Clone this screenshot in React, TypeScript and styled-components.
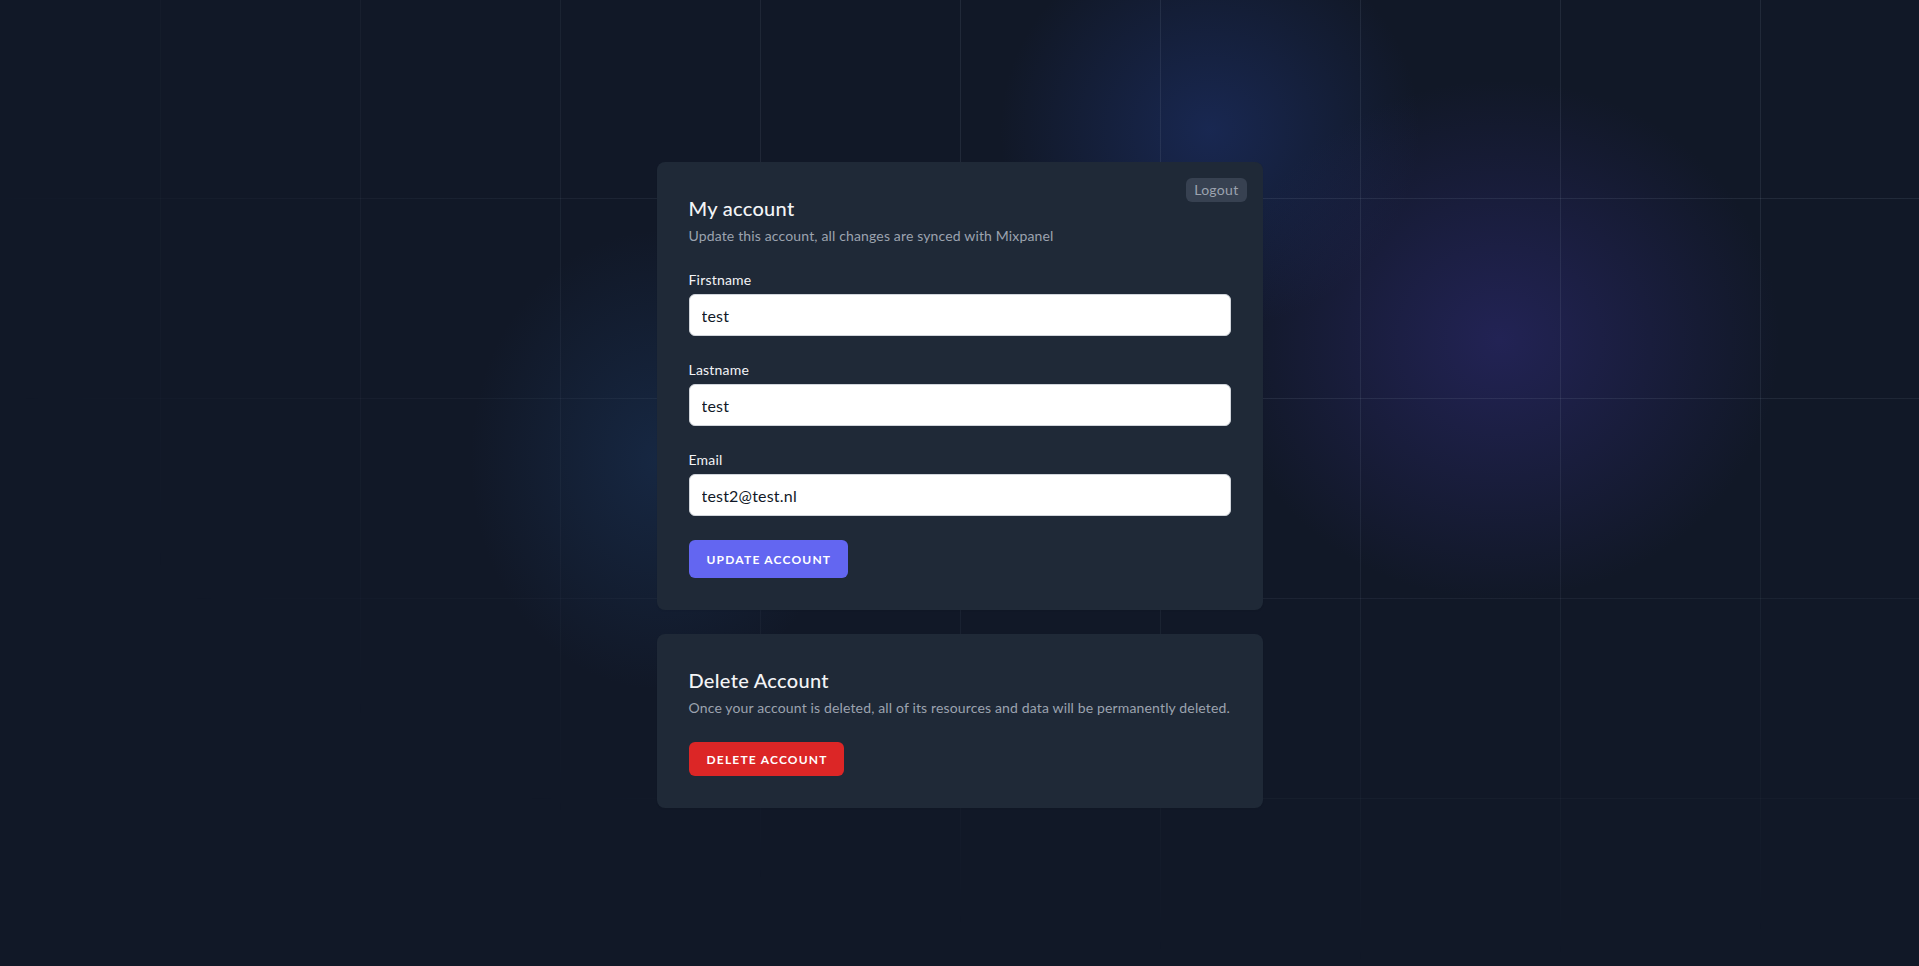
import { createGlobalStyle, styled } from 'styled-components';

const GlobalStyle = createGlobalStyle`
  * {
    box-sizing: border-box;
  }
  html, body {
    margin: 0;
    padding: 0;
    background-color: #111827;
  }
  body {
    font-family: Lato, 'Open Sans', Arial, sans-serif;
    -webkit-font-smoothing: antialiased;
  }
`;

const fields = [
  { id: 'firstname', label: 'Firstname', value: 'test', type: 'text' },
  { id: 'lastname', label: 'Lastname', value: 'test', type: 'text' },
  { id: 'email', label: 'Email', value: 'test2@test.nl', type: 'email' },
];

function App() {
  return (
    <>
      <GlobalStyle />
      <Page>
        <Content>
          <Card>
            <LogoutButton type="button">Logout</LogoutButton>
            <header>
              <Title>My account</Title>
              <Subtitle>Update this account, all changes are synced with Mixpanel</Subtitle>
            </header>

            <Form onSubmit={(e) => e.preventDefault()}>
              {fields.map((field) => (
                <Field key={field.id}>
                  <Label htmlFor={field.id}>{field.label}</Label>
                  <Input id={field.id} type={field.type} defaultValue={field.value} />
                </Field>
              ))}
              {/* <p className="saved">Saved.</p> */}
              <Actions>
                <ActionButton type="submit" $variant="primary">
                  Update account
                </ActionButton>
              </Actions>
            </Form>
          </Card>

          <Card>
            <header>
              <Title>Delete Account</Title>
              <Subtitle>
                Once your account is deleted, all of its resources and data will be permanently deleted.
              </Subtitle>
            </header>
            <Actions $spaced>
              <ActionButton type="button" $variant="danger">
                Delete account
              </ActionButton>
            </Actions>
          </Card>
        </Content>
      </Page>
    </>
  );
}

const Page = styled.div`
  position: relative;
  min-height: 100vh;
  overflow: hidden;
  background-color: #111827;

  /* blurry glows */
  &::before {
    content: '';
    position: absolute;
    inset: 0;
    background:
      radial-gradient(ellipse 280px 260px at 1500px 340px, rgba(55, 48, 140, 0.45), transparent 100%),
      radial-gradient(ellipse 210px 200px at 1210px 130px, rgba(37, 65, 150, 0.38), transparent 100%),
      radial-gradient(ellipse 190px 230px at 660px 460px, rgba(35, 75, 130, 0.3), transparent 100%);
    pointer-events: none;
  }

  /* grid lines */
  &::after {
    content: '';
    position: absolute;
    inset: 0;
    background-image:
      linear-gradient(to right, rgba(148, 163, 184, 0.13) 1px, transparent 1px),
      linear-gradient(to bottom, rgba(148, 163, 184, 0.13) 1px, transparent 1px);
    background-size: 200px 200px;
    background-position: 160px -2px;
    -webkit-mask-image: radial-gradient(ellipse 75% 85% at 72% 15%, #000 35%, transparent 100%);
    mask-image: radial-gradient(ellipse 75% 85% at 72% 15%, #000 35%, transparent 100%);
    pointer-events: none;
  }
`;

const Content = styled.main`
  position: relative;
  z-index: 1;
  width: 606px;
  margin: 0 auto;
  padding-top: 162px;
  display: flex;
  flex-direction: column;
  gap: 24px;
`;

const Card = styled.section`
  position: relative;
  padding: 32px;
  background-color: #1f2937;
  border-radius: 8px;
  box-shadow: 0 1px 2px rgba(0, 0, 0, 0.05);
`;

const LogoutButton = styled.button`
  position: absolute;
  top: 16px;
  right: 16px;
  height: 24px;
  padding: 0 8px;
  border: none;
  border-radius: 6px;
  background-color: #374151;
  color: #9ca3af;
  font-family: inherit;
  font-size: 14px;
  line-height: 20px;
  letter-spacing: 0.3px;
  cursor: pointer;
`;

const Title = styled.h2`
  margin: 0;
  font-size: 20px;
  line-height: 28px;
  font-weight: 500;
  letter-spacing: 0.3px;
  color: #f3f4f6;
`;

const Subtitle = styled.p`
  margin: 4px 0 0;
  font-size: 14px;
  line-height: 20px;
  letter-spacing: 0.15px;
  color: #9ca3af;
  white-space: nowrap;
`;

const Form = styled.form`
  margin-top: 24px;
  display: flex;
  flex-direction: column;
  gap: 24px;
`;

const Field = styled.div`
  display: flex;
  flex-direction: column;
`;

const Label = styled.label`
  font-size: 14px;
  line-height: 20px;
  font-weight: 400;
  letter-spacing: 0.2px;
  color: #f3f4f6;
`;

const Input = styled.input`
  margin-top: 4px;
  width: 100%;
  height: 42px;
  padding: 8px 12px;
  border: 1px solid #d1d5db;
  border-radius: 6px;
  background-color: #fff;
  color: #111827;
  font-family: inherit;
  font-size: 16px;
  line-height: 24px;
  letter-spacing: 0.2px;
  outline: none;
`;

const Actions = styled.div<{ $spaced?: boolean }>`
  display: flex;
  align-items: center;
  gap: 16px;
  margin-top: ${(p) => (p.$spaced ? '24px' : '0')};
`;

const ActionButton = styled.button<{ $variant: 'primary' | 'danger' }>`
  display: inline-flex;
  align-items: center;
  height: ${(p) => (p.$variant === 'primary' ? '38px' : '34px')};
  padding: ${(p) => (p.$variant === 'primary' ? '0 16px 0 17px' : '0 15px 0 17px')};
  border: 1px solid transparent;
  border-radius: 6px;
  background-color: ${(p) => (p.$variant === 'primary' ? '#6366f1' : '#dc2626')};
  color: #fff;
  font-family: inherit;
  font-size: 12px;
  font-weight: 700;
  letter-spacing: 0.1em;
  text-transform: uppercase;
  cursor: pointer;
`;

export default App;
